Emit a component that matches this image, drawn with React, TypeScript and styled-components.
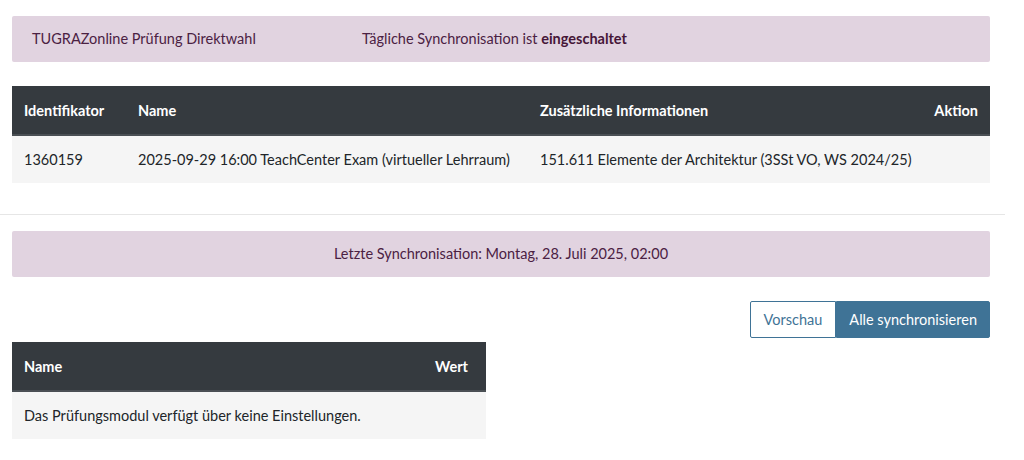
import React from 'react';
import styled, { createGlobalStyle } from 'styled-components';

const GlobalStyle = createGlobalStyle`
  html, body {
    margin: 0;
    padding: 0;
    background: #ffffff;
  }
  body {
    font-family: 'Lato', 'Liberation Sans', sans-serif;
    font-size: 14.5px;
    color: #212529;
  }
`;

const Page = styled.div`
  width: 1005px;
  padding-top: 16px;
`;

const Section = styled.div`
  padding: 0 15px 0 12px;
  display: flex;
  flex-direction: column;
`;

const Alert = styled.div<{ $center?: boolean }>`
  background: #e1d3e0;
  color: #4b2143;
  height: 46px;
  padding: 0 20px;
  border-radius: 2px;
  display: ${(p) => (p.$center ? 'flex' : 'grid')};
  grid-template-columns: 330px 1fr;
  justify-content: ${(p) => (p.$center ? 'center' : 'start')};
  align-items: center;
  line-height: 1;
  white-space: nowrap;

  strong {
    color: #461638;
    font-weight: 700;
  }
`;

const Spacer = styled.div<{ $h: number }>`
  height: ${(p) => p.$h}px;
`;

const Table = styled.table<{ $width?: number }>`
  width: ${(p) => (p.$width ? `${p.$width}px` : '100%')};
  border-collapse: collapse;
  table-layout: fixed;
  font-size: 14.5px;
  white-space: nowrap;
`;

const HeadCell = styled.th<{ $right?: boolean; $w?: number; $pr?: number }>`
  background: #353a3f;
  color: #ffffff;
  font-weight: 700;
  text-align: ${(p) => (p.$right ? 'right' : 'left')};
  height: 48px;
  padding: 0 ${(p) => p.$pr ?? 12}px 0 12px;
  border-bottom: 2px solid #4a4f54;
  width: ${(p) => (p.$w ? `${p.$w}px` : 'auto')};
`;

const Cell = styled.td`
  background: #f5f5f5;
  height: 47px;
  padding: 0 12px;
  color: #212529;
`;

const Divider = styled.hr`
  border: 0;
  border-top: 1px solid #e6e6e6;
  margin: 31px 0 16px;
`;

const ButtonRow = styled.div`
  display: flex;
  justify-content: flex-end;
  margin-top: 24px;
  margin-bottom: 4px;
`;

const Button = styled.button<{ $primary?: boolean }>`
  font-family: inherit;
  font-size: 14.5px;
  height: 37px;
  padding: 0 ${(p) => (p.$primary ? 12 : 13)}px;
  border: 1px solid #3f7396;
  background: ${(p) => (p.$primary ? '#3f7396' : '#ffffff')};
  color: ${(p) => (p.$primary ? '#ffffff' : '#3f7396')};
  border-radius: ${(p) => (p.$primary ? '0 2px 2px 0' : '2px 0 0 2px')};
  cursor: pointer;
`;

export default function App() {
  return (
    <>
      <GlobalStyle />
      <Page>
        <Section>
          <Alert>
            <span>TUGRAZonline Prüfung Direktwahl</span>
            <span>
              Tägliche Synchronisation ist <strong>eingeschaltet</strong>
            </span>
          </Alert>
          <Spacer $h={24} />
          <Table>
            <thead>
              <tr>
                <HeadCell $w={90}>Identifikator</HeadCell>
                <HeadCell $w={378}>Name</HeadCell>
                <HeadCell>Zusätzliche Informationen</HeadCell>
                <HeadCell $right $w={66}>Aktion</HeadCell>
              </tr>
            </thead>
            <tbody>
              <tr>
                <Cell>1360159</Cell>
                <Cell>2025-09-29 16:00 TeachCenter Exam (virtueller Lehrraum)</Cell>
                <Cell>151.611 Elemente der Architektur (3SSt VO, WS 2024/25)</Cell>
                <Cell />
              </tr>
            </tbody>
          </Table>
        </Section>
        <Divider />
        <Section>
          <Alert $center>Letzte Synchronisation: Montag, 28. Juli 2025, 02:00</Alert>
          <ButtonRow>
            <Button>Vorschau</Button>
            <Button $primary>Alle synchronisieren</Button>
          </ButtonRow>
          <Table $width={474}>
            <thead>
              <tr>
                <HeadCell>Name</HeadCell>
                <HeadCell $right $pr={18}>Wert</HeadCell>
              </tr>
            </thead>
            <tbody>
              <tr>
                <Cell colSpan={2}>Das Prüfungsmodul verfügt über keine Einstellungen.</Cell>
              </tr>
            </tbody>
          </Table>
        </Section>
      </Page>
    </>
  );
}
